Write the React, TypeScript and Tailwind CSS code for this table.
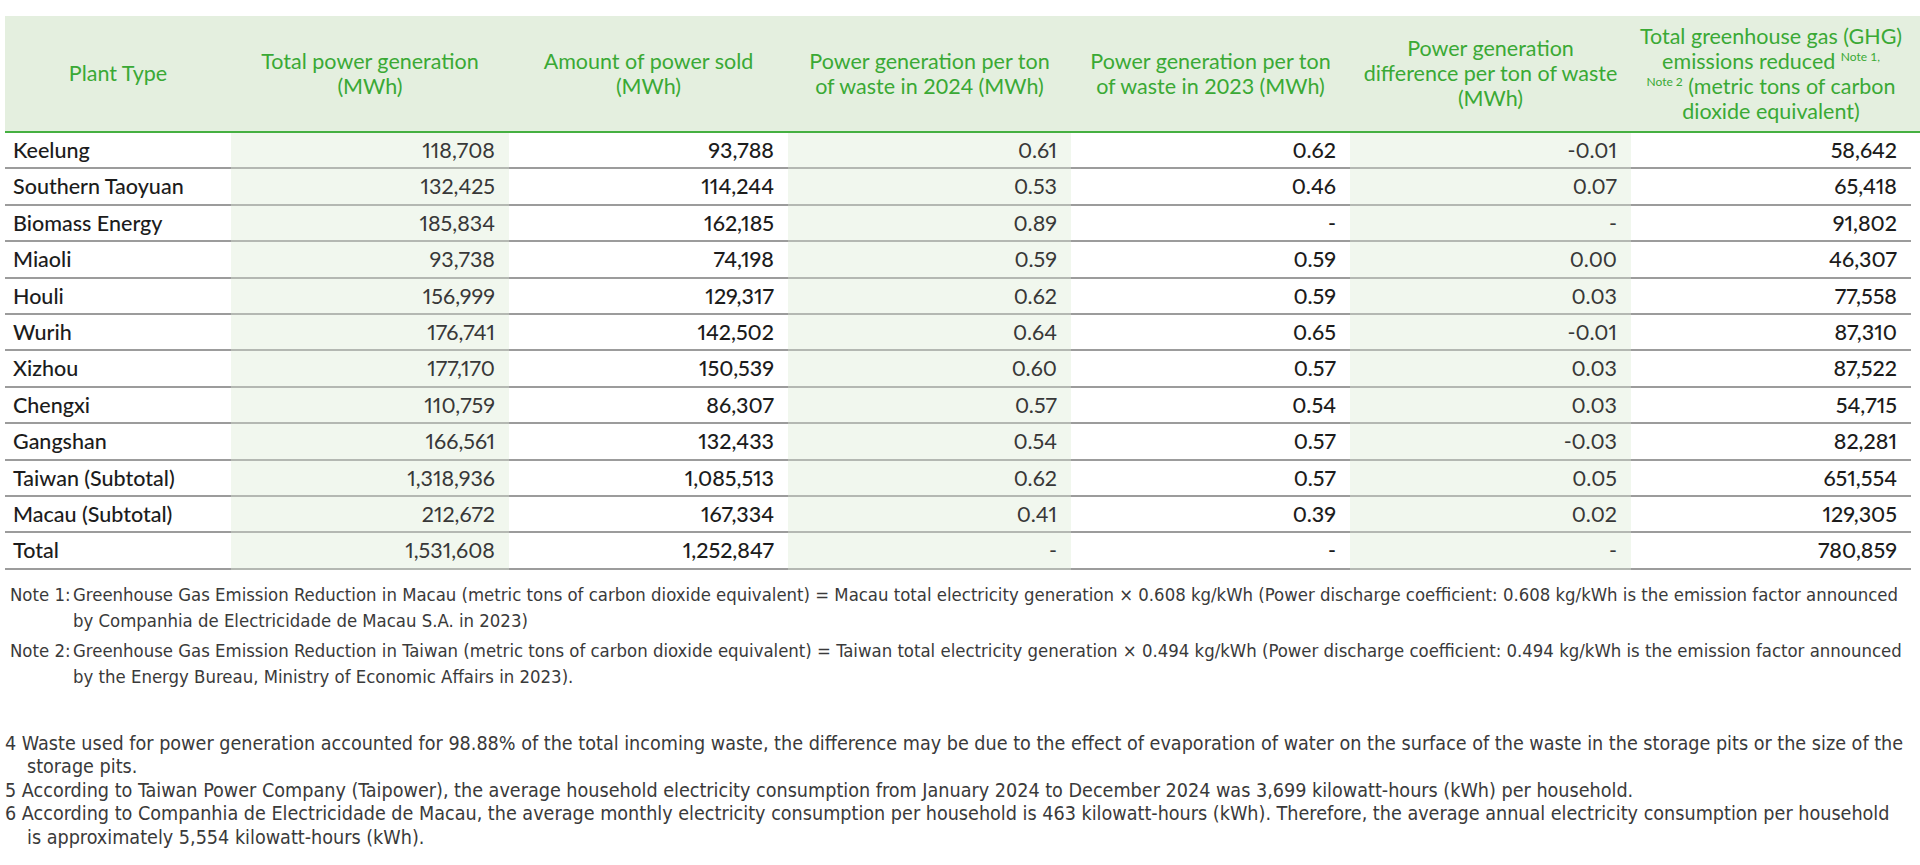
import React from "react";

const GRID = "grid grid-cols-[226px_278px_279px_283px_279px_281px_280px]";

const ROWS: string[][] = [
  ["Keelung", "118,708", "93,788", "0.61", "0.62", "-0.01", "58,642"],
  ["Southern Taoyuan", "132,425", "114,244", "0.53", "0.46", "0.07", "65,418"],
  ["Biomass Energy", "185,834", "162,185", "0.89", "-", "-", "91,802"],
  ["Miaoli", "93,738", "74,198", "0.59", "0.59", "0.00", "46,307"],
  ["Houli", "156,999", "129,317", "0.62", "0.59", "0.03", "77,558"],
  ["Wurih", "176,741", "142,502", "0.64", "0.65", "-0.01", "87,310"],
  ["Xizhou", "177,170", "150,539", "0.60", "0.57", "0.03", "87,522"],
  ["Chengxi", "110,759", "86,307", "0.57", "0.54", "0.03", "54,715"],
  ["Gangshan", "166,561", "132,433", "0.54", "0.57", "-0.03", "82,281"],
  ["Taiwan (Subtotal)", "1,318,936", "1,085,513", "0.62", "0.57", "0.05", "651,554"],
  ["Macau (Subtotal)", "212,672", "167,334", "0.41", "0.39", "0.02", "129,305"],
  ["Total", "1,531,608", "1,252,847", "-", "-", "-", "780,859"],
];

const NOTE_FONT = "font-['DejaVu_Sans_Condensed','Liberation_Sans_Narrow',Roboto,sans-serif]";

function HeaderCell({ children }: { children: React.ReactNode }) {
  return (
    <div className="flex items-center justify-center text-center px-1 text-[21.5px] leading-[25px] text-[#3aa935]">
      <div>{children}</div>
    </div>
  );
}

function Sup({ children }: { children: React.ReactNode }) {
  return <span className="text-[12px] leading-none relative -top-[8px]">{children}</span>;
}

export default function App() {
  return (
    <div className="w-[1920px] h-[865px] bg-white overflow-hidden font-['Lato','Open_Sans',sans-serif]">
      <div className="pl-[5px] pt-[16px]">
        {/* header */}
        <div className={`${GRID} h-[117px] bg-[#e4efdf] border-b-2 border-[#45b041]`}>
          <HeaderCell>Plant Type</HeaderCell>
          <HeaderCell>
            Total power generation
            <br />
            (MWh)
          </HeaderCell>
          <HeaderCell>
            Amount of power sold
            <br />
            (MWh)
          </HeaderCell>
          <HeaderCell>
            Power generation per ton
            <br />
            of waste in 2024 (MWh)
          </HeaderCell>
          <HeaderCell>
            Power generation per ton
            <br />
            of waste in 2023 (MWh)
          </HeaderCell>
          <HeaderCell>
            Power generation
            <br />
            difference per ton of waste
            <br />
            (MWh)
          </HeaderCell>
          <HeaderCell>
            Total greenhouse gas (GHG)
            <br />
            emissions reduced <Sup>Note 1,</Sup>
            <br />
            <Sup>Note 2</Sup> (metric tons of carbon
            <br />
            dioxide equivalent)
          </HeaderCell>
        </div>

        {/* body */}
        {ROWS.map((row) => (
          <div key={row[0]} className={`${GRID} h-[36.4px] text-[21.5px] proportional-nums`}>
            {row.map((cell, i) => {
              const shaded = i % 2 === 1;
              return (
                <div
                  key={i}
                  className={`flex items-center border-b-2 ${
                    i === 0 ? "justify-start pl-[8px]" : "justify-end pr-[14px]"
                  } ${
                    shaded
                      ? "bg-[#f1f7ee] border-[#b4b8b2] text-[#383838] font-normal"
                      : "bg-white border-[#9c9c9c] text-[#1c1c1c] font-medium"
                  }`}
                >
                  {cell}
                </div>
              );
            })}
          </div>
        ))}
      </div>

      {/* table notes */}
      <div className={`pl-[10px] pr-[4px] mt-[12px] text-[18.4px] leading-[26px] text-[#3a3a3a] ${NOTE_FONT}`}>
        <div className="flex">
          <div className="w-[63px] shrink-0 whitespace-nowrap">Note 1:</div>
          <div className="whitespace-nowrap">
            Greenhouse Gas Emission Reduction in Macau (metric tons of carbon dioxide equivalent) = Macau total
            electricity generation × 0.608 kg/kWh (Power discharge coefficient: 0.608 kg/kWh is the emission factor
            announced
            <br />
            by Companhia de Electricidade de Macau S.A. in 2023)
          </div>
        </div>
        <div className="flex mt-[4px]">
          <div className="w-[63px] shrink-0 whitespace-nowrap">Note 2:</div>
          <div className="whitespace-nowrap">
            Greenhouse Gas Emission Reduction in Taiwan (metric tons of carbon dioxide equivalent) = Taiwan total
            electricity generation × 0.494 kg/kWh (Power discharge coefficient: 0.494 kg/kWh is the emission factor
            announced
            <br />
            by the Energy Bureau, Ministry of Economic Affairs in 2023).
          </div>
        </div>
      </div>

      {/* footnotes */}
      <div className={`pl-[5px] pr-[4px] mt-[42px] text-[19.6px] leading-[23.5px] text-[#3a3a3a] ${NOTE_FONT}`}>
        <p className="pl-[22px] -indent-[22px]">
          4 Waste used for power generation accounted for 98.88% of the total incoming waste, the difference may be due
          to the effect of evaporation of water on the surface of the waste in the storage pits or the size of the
          <br />
          storage pits.
        </p>
        <p className="pl-[22px] -indent-[22px]">
          5 According to Taiwan Power Company (Taipower), the average household electricity consumption from January
          2024 to December 2024 was 3,699 kilowatt-hours (kWh) per household.
        </p>
        <p className="pl-[22px] -indent-[22px]">
          6 According to Companhia de Electricidade de Macau, the average monthly electricity consumption per household
          is 463 kilowatt-hours (kWh). Therefore, the average annual electricity consumption per household
          <br />
          is approximately 5,554 kilowatt-hours (kWh).
        </p>
      </div>
    </div>
  );
}
